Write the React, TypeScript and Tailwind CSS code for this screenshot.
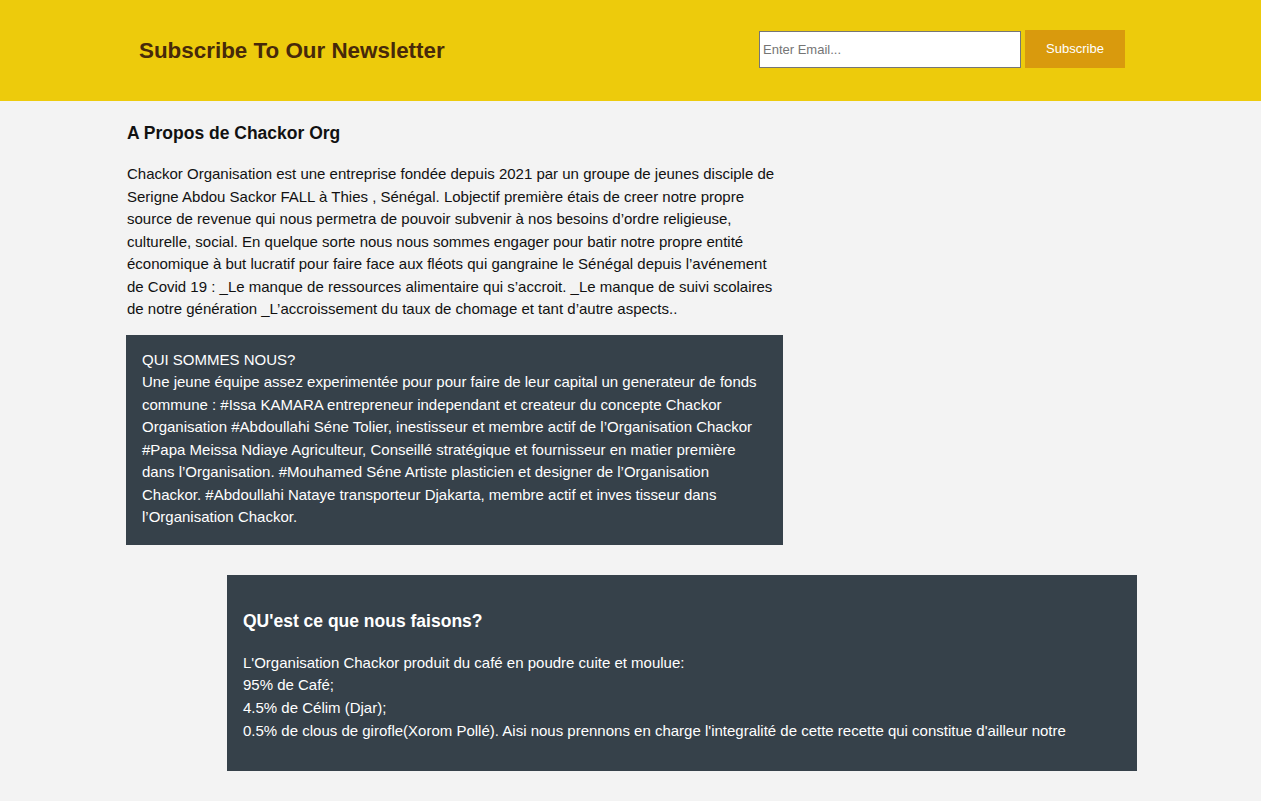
export default function App() {
  return (
    <div className="min-h-[801px] bg-[#f3f3f3] font-['Liberation_Sans',Arial,sans-serif] text-[15px] leading-[22.5px] text-[#111]">
      <header className="flex h-[101px] items-center justify-between bg-[#edcb0c] pl-[139px] pr-[136px]">
        <h1 className="mt-[2px] text-[22.4px] font-bold text-[#47290a]">Subscribe To Our Newsletter</h1>
        <form className="mb-[3px] flex items-end gap-[4px]">
          <input
            type="email"
            placeholder="Enter Email..."
            className="h-[37px] w-[262px] border border-[#767676] bg-white px-[3px] text-[13px] text-[#333] placeholder:text-[#757575]"
          />
          <button type="button" className="h-[38px] w-[100px] bg-[#d99a0d] text-[13px] text-white">
            Subscribe
          </button>
        </form>
      </header>

      <main className="pt-[21px] pb-[30px]">
        <section className="ml-[126px] w-[657px]">
          <h2 className="pl-[1px] text-[17.5px] font-bold leading-[22px]">A Propos de Chackor Org</h2>
          <p className="mt-[19px] pl-[1px]">
            Chackor Organisation est une entreprise fondée depuis 2021 par un groupe de jeunes disciple de Serigne Abdou
            Sackor FALL à Thies , Sénégal. Lobjectif première étais de creer notre propre source de revenue qui nous
            permetra de pouvoir subvenir à nos besoins d’ordre religieuse, culturelle, social. En quelque sorte nous
            nous sommes engager pour batir notre propre entité économique à but lucratif pour faire face aux fléots qui
            gangraine le Sénégal depuis l’avénement de Covid 19 : _Le manque de ressources alimentaire qui s’accroit.
            _Le manque de suivi scolaires de notre génération _L’accroissement du taux de chomage et tant d’autre
            aspects..
          </p>
          <div className="mt-[14px] bg-[#36414a] px-[16px] pt-[14px] pb-[16px] text-white">
            <p>QUI SOMMES NOUS?</p>
            <p>
              Une jeune équipe assez experimentée pour pour faire de leur capital un generateur de fonds commune :
              #Issa KAMARA entrepreneur independant et createur du concepte Chackor Organisation #Abdoullahi Séne
              Tolier, inestisseur et membre actif de l’Organisation Chackor #Papa Meissa Ndiaye Agriculteur, Conseillé
              stratégique et fournisseur en matier première dans l’Organisation. #Mouhamed Séne Artiste plasticien et
              designer de l’Organisation Chackor. #Abdoullahi Nataye transporteur Djakarta, membre actif et inves
              tisseur dans l’Organisation Chackor.
            </p>
          </div>
        </section>

        <section className="mt-[30px] ml-[227px] w-[910px] bg-[#36414a] px-[16px] pt-[35px] pb-[29px] text-white">
          <h3 className="text-[17.5px] font-bold leading-[22px]">QU&apos;est ce que nous faisons?</h3>
          <p className="mt-[20px] leading-[22.7px]">
            L&apos;Organisation Chackor produit du café en poudre cuite et moulue:
            <br />
            95% de Café;
            <br />
            4.5% de Célim (Djar);
            <br />
            0.5% de clous de girofle(Xorom Pollé). Aisi nous prennons en charge l&apos;integralité de cette recette qui
            constitue d&apos;ailleur notre
          </p>
        </section>
      </main>
    </div>
  )
}
